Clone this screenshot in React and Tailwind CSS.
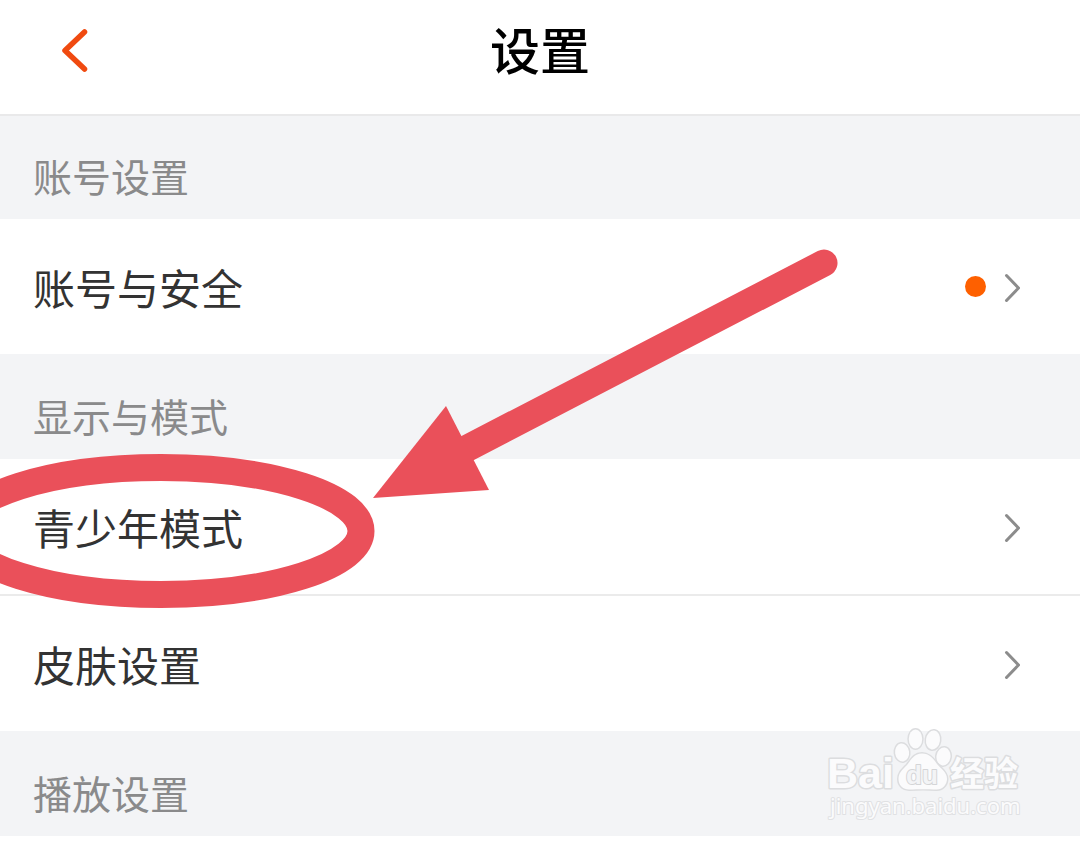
import React from "react";

const groups = [
  { title: "账号设置", items: [{ label: "账号与安全", dot: true }] },
  { title: "显示与模式", items: [{ label: "青少年模式" }, { label: "皮肤设置" }] },
  { title: "播放设置", items: [] },
];

function Chevron() {
  return (
    <svg className="h-8 w-5 shrink-0" viewBox="0 0 20 32" fill="none" aria-hidden="true">
      <path d="M6.500 4.500 L18.500 17 L6.500 29.500" stroke="#8c8c8c" strokeWidth="3" strokeLinecap="round" strokeLinejoin="round" />
    </svg>
  );
}

function Row({ label, dot }) {
  return (
    <li>
      <a href="#" className="flex items-center justify-between py-9 pl-[33px] pr-15 text-[42px] leading-[63px] text-[#333333]">
        <span>{label}</span>
        <span className="flex items-center gap-3.5">
          {dot && <span className="size-[21px] rounded-full bg-[#fe6000]" />}
          <Chevron />
        </span>
      </a>
    </li>
  );
}

function Watermark() {
  return (
    <svg
      className="absolute right-[54px] bottom-3 h-24 w-50 overflow-visible"
      viewBox="0 0 200 96"
      fill="#fbfbfc"
      stroke="#dcdddf"
      strokeWidth="3"
      strokeLinejoin="round"
      paintOrder="stroke"
      role="img"
      aria-label="Baidu 经验"
    >
      <text x="1" y="60" fontFamily="Liberation Sans, sans-serif" fontWeight="700" fontSize="43">Bai</text>
      <g strokeWidth="3">
        <ellipse cx="76" cy="24.500" rx="7" ry="9" transform="rotate(-8 76 24)" />
        <ellipse cx="89.500" cy="11" rx="6.700" ry="9.500" />
        <ellipse cx="107" cy="12" rx="7" ry="9.500" transform="rotate(8 107 12)" />
        <ellipse cx="117.500" cy="28.500" rx="7" ry="9" transform="rotate(8 117.5 28.5)" />
        <path d="M96 25.500 C88 25.500 85 32 81 37 C76 42 72.500 45 72.500 51 C72.500 58 78 62 84 61.500 C91 61 103 61 110 61.500 C116 62 121 57 121 51 C121 44 115 41 111 36 C107 30 103 25.500 96 25.500 Z" />
      </g>
      <text x="80" y="56" fontFamily="Liberation Sans, sans-serif" fontWeight="700" fontSize="26" fill="#f3f4f6" stroke="#d4d5d7" strokeWidth="2">du</text>
      <text x="124" y="58" fontFamily="Noto Sans CJK SC, sans-serif" fontWeight="700" fontSize="34">经验</text>
      <text x="4" y="86" fontFamily="Noto Sans, sans-serif" fontSize="22" strokeWidth="2" stroke="#e0e1e3">jingyan.baidu.com</text>
    </svg>
  );
}

function Markup() {
  return (
    <svg
      className="pointer-events-none absolute top-0 left-0 h-[844px] w-[1080px]"
      viewBox="0 0 1080 844"
      fill="none"
      aria-hidden="true"
    >
      <ellipse cx="161" cy="531" rx="200" ry="63.5" stroke="#ea505a" strokeWidth="27" />
      <path d="M824 263 L462 451" stroke="#ea505a" strokeWidth="27" strokeLinecap="round" />
      <path d="M373 498 L446 406 L489 490 Z" fill="#ea505a" />
    </svg>
  );
}

export default function App() {
  return (
    <div className="relative min-h-screen overflow-hidden bg-white font-['Noto_Sans_CJK_SC',sans-serif]">
      <header className="grid grid-cols-[1fr_auto_1fr] items-center px-14 pt-[11px] pb-7">
        <button type="button" aria-label="返回" className="justify-self-start">
          <svg className="h-12 w-10" viewBox="0 0 40 48" fill="none" aria-hidden="true">
            <path d="M28.5 7 L9 25.500 L28.5 44" stroke="#f04a10" strokeWidth="5.500" strokeLinecap="round" strokeLinejoin="round" />
          </svg>
        </button>
        <h1 className="text-[50px] leading-[75px] font-medium text-black">设置</h1>
      </header>
      <main className="border-t-2 border-[#e9e9ea] bg-white">
        {groups.map((group, index) => (
          <section key={group.title}>
            <div className={index === 0 ? "relative bg-[#f3f4f6] pt-[31px] pb-4 pl-[33px]" : "relative bg-[#f3f4f6] pt-[33px] pb-4 pl-[33px]"}>
              <h2 className="text-[39px] leading-[56px] text-[#8a8a8b]">{group.title}</h2>
              {index === groups.length - 1 && <Watermark />}
            </div>
            <ul className="divide-y-2 divide-[#ebebeb]">
              {group.items.map((item) => (
                <Row key={item.label} label={item.label} dot={item.dot} />
              ))}
            </ul>
          </section>
        ))}
      </main>
      <Markup />
    </div>
  );
}
